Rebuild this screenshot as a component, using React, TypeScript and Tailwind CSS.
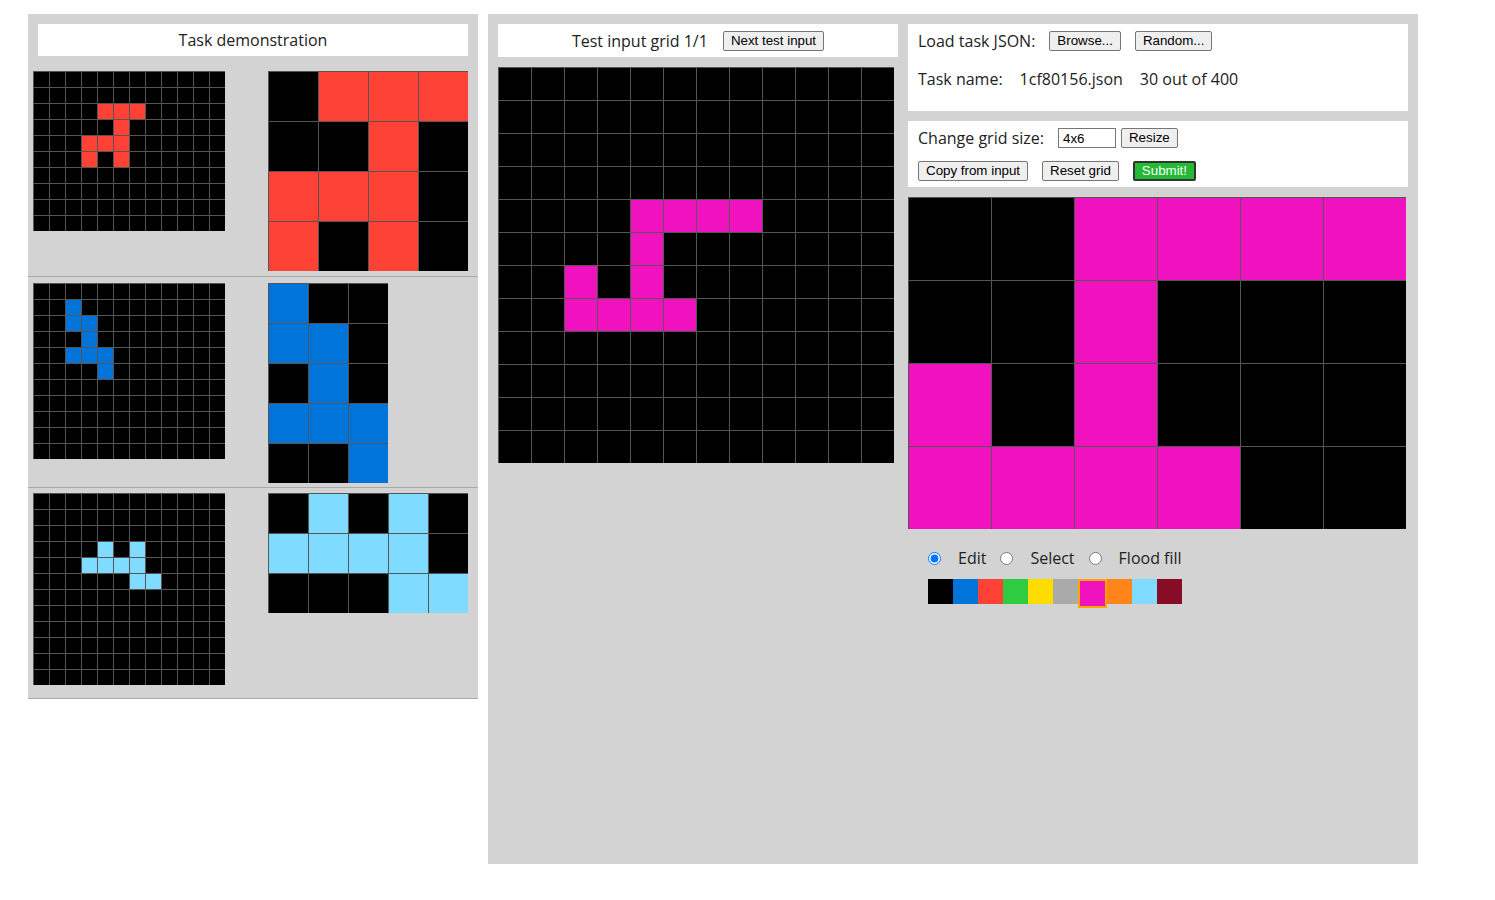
import React from "react";

const COLORS: Record<string, string> = {
    "0": "bg-[#000000]",
    "1": "bg-[#0074D9]",
    "2": "bg-[#FF4136]",
    "3": "bg-[#2ECC40]",
    "4": "bg-[#FFDC00]",
    "5": "bg-[#AAAAAA]",
    "6": "bg-[#F012BE]",
    "7": "bg-[#FF851B]",
    "8": "bg-[#7FDBFF]",
    "9": "bg-[#870C25]",
};

const zeros = (n: number, w = 12) => Array.from({ length: n }, () => "0".repeat(w));

const pairs = [
    {
        input: [...zeros(2), "000022200000", "000002000000", "000222000000", "000202000000", ...zeros(4)],
        output: ["0222", "0020", "2220", "2020"],
        outCell: "w-[50px] h-[50px]",
    },
    {
        input: [...zeros(1), "001000000000", "001100000000", "000100000000", "001110000000", "000010000000", ...zeros(5)],
        output: ["100", "110", "010", "111", "001"],
        outCell: "w-[40px] h-[40px]",
    },
    {
        input: [...zeros(3), "000080800000", "000888800000", "000000880000", ...zeros(6)],
        output: ["08080", "88880", "00088"],
        outCell: "w-[40px] h-[40px]",
    },
];

const testInput = [...zeros(4), "000066660000", "000060000000", "006060000000", "006666000000", ...zeros(4)];
const testOutput = ["006666", "006000", "606000", "666600"];

function Grid({ rows, cell }: { rows: string[]; cell: string }) {
    return (
        <div className="flex flex-col shrink-0">
            {rows.map((row, r) => (
                <div key={r} className="flex">
                    {row.split("").map((c, i) => (
                        <div key={i} className={`${cell} ${COLORS[c]} border-l border-t border-[#555555]`} />
                    ))}
                </div>
            ))}
        </div>
    );
}

function Btn({ children, className = "" }: { children: React.ReactNode; className?: string }) {
    return (
        <button
            className={`h-[20px] px-[7px] rounded-[2px] border border-[#767676] bg-[#efefef] text-[13.33px] leading-none text-black font-['Liberation_Sans',Arial,sans-serif] ${className}`}
        >
            {children}
        </button>
    );
}

const palette = ["0", "1", "2", "3", "4", "5", "6", "7", "8", "9"];

export default function App() {
    return (
        <div className="min-h-[900px] w-full bg-white pt-[14px] pl-[28px] flex items-start gap-[10px] text-[16px] text-[#222222] font-['Open_Sans',sans-serif]">
            {/* demonstration */}
            <div className="w-[450px] bg-[#d3d3d3]">
                <div className="mx-[10px] mt-[10px] h-[32px] bg-white flex items-center justify-center">
                    Task demonstration
                </div>
                <div className="mt-[14px]">
                    {pairs.map((p, i) => (
                        <div
                            key={i}
                            className={`flex pl-[5px] border-b border-[#a9a9a9] ${i === 0 ? "pt-[1px] pb-[5px]" : i === 1 ? "pt-[6px] pb-[4px]" : "pt-[5px] pb-[13px]"}`}
                        >
                            <div className="w-[235px] shrink-0">
                                <Grid rows={p.input} cell="w-[16px] h-[16px]" />
                            </div>
                            <Grid rows={p.output} cell={p.outCell} />
                        </div>
                    ))}
                </div>
            </div>

            {/* test area */}
            <div className="w-[930px] h-[850px] bg-[#d3d3d3] p-[10px] flex gap-[10px]">
                <div className="w-[400px] flex flex-col">
                    <div className="h-[33px] bg-white flex items-center justify-center gap-[15px]">
                        <span>Test input grid 1/1</span>
                        <Btn>Next test input</Btn>
                    </div>
                    <div className="mt-[10px]">
                        <Grid rows={testInput} cell="w-[33px] h-[33px]" />
                    </div>
                </div>

                <div className="w-[500px] flex flex-col">
                    <div className="h-[87px] bg-white px-[10px] pt-[6px]">
                        <div className="flex items-center h-[22px]">
                            <span>Load task JSON:</span>
                            <Btn className="ml-[14px]">Browse...</Btn>
                            <Btn className="ml-[14px]">Random...</Btn>
                        </div>
                        <div className="flex items-center h-[22px] mt-[16px]">
                            <span>Task name:</span>
                            <span className="ml-[17px]">1cf80156.json</span>
                            <span className="ml-[17px]">30 out of 400</span>
                        </div>
                    </div>

                    <div className="h-[66px] mt-[10px] bg-white px-[10px] pt-[6px]">
                        <div className="flex items-center h-[22px]">
                            <span>Change grid size:</span>
                            <input
                                readOnly
                                value="4x6"
                                className="ml-[14px] w-[58px] h-[20px] border border-[#767676] px-[4px] text-[13.33px] text-black font-['Liberation_Sans',Arial,sans-serif] bg-white outline-none"
                            />
                            <Btn className="ml-[5px]">Resize</Btn>
                        </div>
                        <div className="flex items-center h-[22px] mt-[11px]">
                            <Btn>Copy from input</Btn>
                            <Btn className="ml-[14px]">Reset grid</Btn>
                            <button className="ml-[14px] h-[20px] px-[7px] rounded-[2px] border-2 border-[#333333] bg-[#22bb33] text-white text-[13.33px] leading-none font-['Liberation_Sans',Arial,sans-serif]">
                                Submit!
                            </button>
                        </div>
                    </div>

                    <div className="mt-[10px]">
                        <Grid rows={testOutput} cell="w-[83px] h-[83px]" />
                    </div>

                    <div className="flex items-center h-[22px] mt-[18px] pl-[20px]">
                        <input type="radio" name="mode" defaultChecked className="w-[13px] h-[13px] m-0" />
                        <span className="ml-[17px]">Edit</span>
                        <input type="radio" name="mode" className="w-[13px] h-[13px] m-0 ml-[14px]" />
                        <span className="ml-[17px]">Select</span>
                        <input type="radio" name="mode" className="w-[13px] h-[13px] m-0 ml-[14px]" />
                        <span className="ml-[17px]">Flood fill</span>
                    </div>

                    <div className="flex items-start mt-[10px] pl-[20px]">
                        {palette.map((c) => (
                            <div
                                key={c}
                                className={
                                    c === "6"
                                        ? `w-[29px] h-[29px] ${COLORS[c]} border-2 border-[#ffa500]`
                                        : `w-[25px] h-[25px] ${COLORS[c]}`
                                }
                            />
                        ))}
                    </div>
                </div>
            </div>
        </div>
    );
}
